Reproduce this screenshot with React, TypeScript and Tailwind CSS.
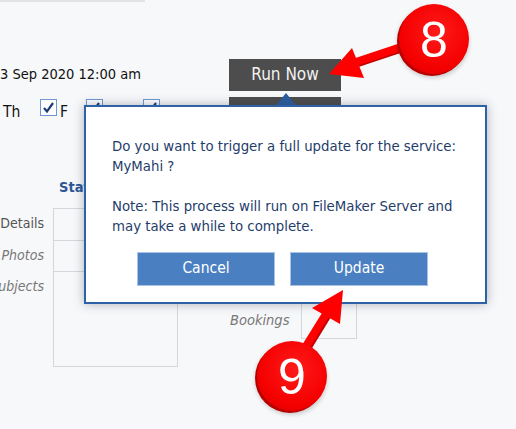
import React from "react";

const uiFont = { fontFamily: '"DejaVu Sans Condensed", "DejaVu Sans", sans-serif' };

function Check({ className = "" }: { className?: string }) {
  return (
    <span
      className={`flex h-[17px] w-[17px] items-center justify-center border border-[#6d9ad6] bg-white ${className}`}
    >
      <svg width="13" height="13" viewBox="0 0 13 13">
        <path d="M2 7 L5 10.5 L11 2" fill="none" stroke="#1d3c78" strokeWidth="2.2" />
      </svg>
    </span>
  );
}

function Badge({ n, cx, cy }: { n: string; cx: number; cy: number }) {
  return (
    <g>
      <circle cx={cx - 1} cy={cy + 3} r={36} fill="#000" opacity="0.18" filter="url(#blur)" />
      <circle cx={cx - 2} cy={cy + 2} r={35} fill="#b80000" />
      <circle cx={cx} cy={cy} r={35} fill="url(#redGrad)" />
      <text
        x={cx}
        y={cy + 18}
        textAnchor="middle"
        fill="#fff"
        fontSize="50"
        fontFamily='"Liberation Sans", Arial, sans-serif'
      >
        {n}
      </text>
    </g>
  );
}

export default function App() {
  return (
    <div className="relative h-[429px] w-[516px] overflow-hidden bg-[#f7f8fa] text-[14.5px]" style={uiFont}>
      {/* background layout */}
      <div className="h-[2px] w-[145px] bg-[#e1e3e7]" />

      <div className="mt-[57px] flex h-[32px] items-center">
        <span className="w-[229px] text-[#111]">3 Sep 2020 12:00 am</span>
        <button className="h-[32px] w-[112px] bg-[#4d4d4d] text-[17px] text-[#f2f2f2]">Run Now</button>
      </div>

      <div className="mt-[6px] flex h-[40px] items-start">
        <span className="ml-[3px] mt-[4px] w-[37px] text-[15.5px] text-[#111]">Th</span>
        <Check className="mt-[2px]" />
        <span className="ml-[3px] mt-[4px] w-[26px] text-[15.5px] text-[#111]">F</span>
        <Check className="mt-[2px]" />
        <span className="ml-[3px] mt-[4px] w-[37px] text-[15.5px] text-[#111]">S</span>
        <Check className="mt-[2px]" />
        <span className="ml-[3px] mt-[4px] w-[66px] text-[15.5px] text-[#111]">S</span>
        <div className="h-[40px] w-[112px] bg-[#4d4d4d]" />
      </div>

      <div className="ml-[59px] mt-[40px] font-bold text-[#2b5797]">Status</div>

      <div className="mt-[9px] flex">
        <div className="flex w-[53px] flex-col pr-[9px] text-right text-[14px] text-[#555]">
          <div className="flex h-[32px] items-center justify-end">Details</div>
          <div className="flex h-[31px] items-center justify-end italic text-[#777]">Photos</div>
          <div className="flex h-[31px] items-center justify-end italic text-[#777]">Subjects</div>
        </div>
        <div className="flex w-[125px] flex-col">
          <div className="h-[32px] border-l border-t border-[#d3d6db]" />
          <div className="h-[31px] border-l border-t border-[#d3d6db]" />
          <div className="h-[96px] border border-[#d3d6db]" />
        </div>
        <div className="flex w-[40px] flex-col">
          <div className="h-[32px] border-t border-[#d3d6db]" />
          <div className="h-[31px] border-t border-[#d3d6db]" />
        </div>
        <div className="ml-[12px] mt-[93px] flex h-[38px] items-center">
          <span className="mr-[12px] pt-[2px] italic text-[#777]">Bookings</span>
          <div className="h-[38px] w-[56px] border border-[#d3d6db]" />
        </div>
      </div>

      {/* dialog */}
      <svg className="absolute left-[274px] top-[92px]" width="24" height="15" viewBox="0 0 24 15">
        <path d="M1 14.5 L12 1 L23 14.5 Z" fill="#2c5d9e" />
      </svg>
      <div className="absolute left-[84px] top-[105px] h-[199px] w-[403px] border-2 border-[#2e62a6] bg-white shadow-[0_0_10px_rgba(40,50,70,0.35)]">
        <div className="pl-[26px] pt-[29px] text-[14.8px] leading-[20px] text-[#1f3d6b]">
          <p>Do you want to trigger a full update for the service:</p>
          <p>MyMahi ?</p>
          <p className="mt-[20px]">Note: This process will run on FileMaker Server and</p>
          <p>may take a while to complete.</p>
        </div>
        <div className="ml-[51px] mt-[16px] flex gap-[15px]">
          <button className="h-[34px] w-[138px] border border-[#a9c3e6] bg-[#4a80c2] text-[15.5px] text-white">
            Cancel
          </button>
          <button className="h-[34px] w-[138px] border border-[#a9c3e6] bg-[#4a80c2] text-[15.5px] text-white">
            Update
          </button>
        </div>
      </div>

      {/* annotations */}
      <svg className="pointer-events-none absolute left-0 top-0" width="516" height="429" viewBox="0 0 516 429">
        <defs>
          <radialGradient id="redGrad" cx="0.55" cy="0.4" r="0.65">
            <stop offset="0" stopColor="#ff1a1a" />
            <stop offset="0.8" stopColor="#f40000" />
            <stop offset="1" stopColor="#e00000" />
          </radialGradient>
          <filter id="blur" x="-20%" y="-20%" width="140%" height="140%">
            <feGaussianBlur stdDeviation="2" />
          </filter>
        </defs>
        <g fill="#f00" stroke="none">
          <path d="M358 63 L412 45" stroke="#c40000" strokeWidth="8" />
          <path d="M356 62 L410 44" stroke="#f00" strokeWidth="8" />
          <path d="M329 74 L352 48 L364 78 Z" />
          <path d="M327 316 L305 352" stroke="#c40000" strokeWidth="8" />
          <path d="M326 314 L303 351" stroke="#f00" strokeWidth="8" />
          <path d="M343 290 L312 308 L340 324 Z" />
        </g>
        <Badge n="8" cx={434} cy={39} />
        <Badge n="9" cx={292} cy={376} />
      </svg>
    </div>
  );
}
